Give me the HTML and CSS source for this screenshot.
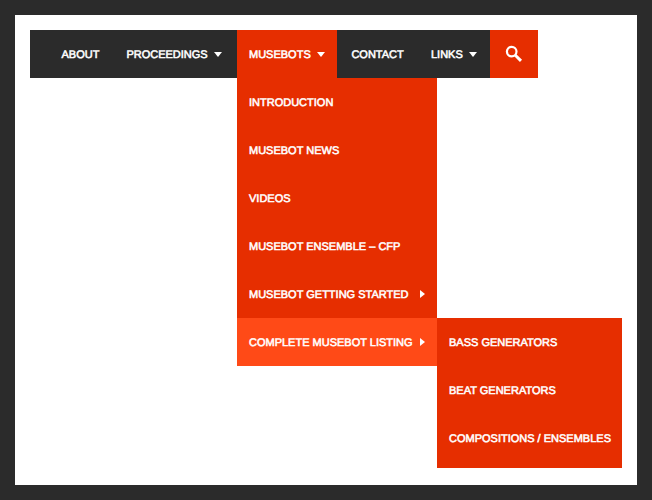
FILE: index.html
```html
<!DOCTYPE html>
<html lang="en">
<head>
<meta charset="utf-8">
<title>Musebots</title>
<link rel="stylesheet" href="styles.css">
</head>
<body>
<main class="page">
<nav class="bar">
<a class="item about">ABOUT</a>
<a class="item proceedings">PROCEEDINGS<i class="down"></i></a>
<div class="active">
<a class="item musebots">MUSEBOTS<i class="down"></i></a>
<div class="menu">
<a class="item">INTRODUCTION</a>
<a class="item">MUSEBOT NEWS</a>
<a class="item">VIDEOS</a>
<a class="item">MUSEBOT ENSEMBLE – CFP</a>
<a class="item">MUSEBOT GETTING STARTED<i class="right"></i></a>
<div class="parent">
<a class="item hover">COMPLETE MUSEBOT LISTING<i class="right"></i></a>
<div class="submenu">
<a class="item">BASS GENERATORS</a>
<a class="item">BEAT GENERATORS</a>
<a class="item">COMPOSITIONS / ENSEMBLES</a>
</div>
</div>
</div>
</div>
<a class="item contact">CONTACT</a>
<a class="item links">LINKS<i class="down"></i></a>
<a class="search"><svg width="18" height="18" viewBox="0 0 18 18"><circle cx="6.7" cy="6.6" r="4.8" fill="none" stroke="#fff" stroke-width="2.2"/><path d="M10.3 10.2 16 15.9" fill="none" stroke="#fff" stroke-width="3"/></svg></a>
</nav>
</main>
</body>
</html>
```
FILE: styles.css
```css
* { box-sizing: border-box; }
body {
  margin: 0;
  height: 500px;
  padding: 15px;
  background: #2b2b2b;
  font: 11px/46px "Liberation Sans", Arial, sans-serif;
  -webkit-text-stroke: 0.55px #fff;
  text-rendering: geometricPrecision;
  color: #fff;
}
.page { height: 470px; padding: 15px; background: #fff; }
.bar { display: flex; width: 508px; height: 48px; padding-left: 19px; background: #2b2b2b; }
.item { display: flex; align-items: center; height: 48px; padding: 2px 12px 0; white-space: nowrap; }
.about { width: 65px; padding-left: 12.5px; }
.proceedings { width: 123px; padding-left: 12.4px; padding-right: 15px; }
.musebots { width: 100px; }
.contact { width: 80px; padding-left: 14.4px; }
.links { width: 73px; padding-left: 14px; padding-right: 13px; }
.active { position: relative; background: #e62e00; }
.menu { position: absolute; top: 48px; left: 0; width: 200px; background: #e62e00; }
.parent { position: relative; }
.hover { background: #ff4a17; }
.submenu { position: absolute; top: 0; left: 200px; width: 185px; height: 150px; background: #e62e00; }
.down, .right { margin: 0 0 2px auto; width: 0; height: 0; }
.down { border: 4px solid transparent; border-top: 5px solid #fff; border-bottom: 0; }
.right { border: 4px solid transparent; border-left: 5px solid #fff; border-right: 0; }
.search { display: flex; align-items: center; justify-content: center; width: 48px; height: 48px; background: #e62e00; }
```
